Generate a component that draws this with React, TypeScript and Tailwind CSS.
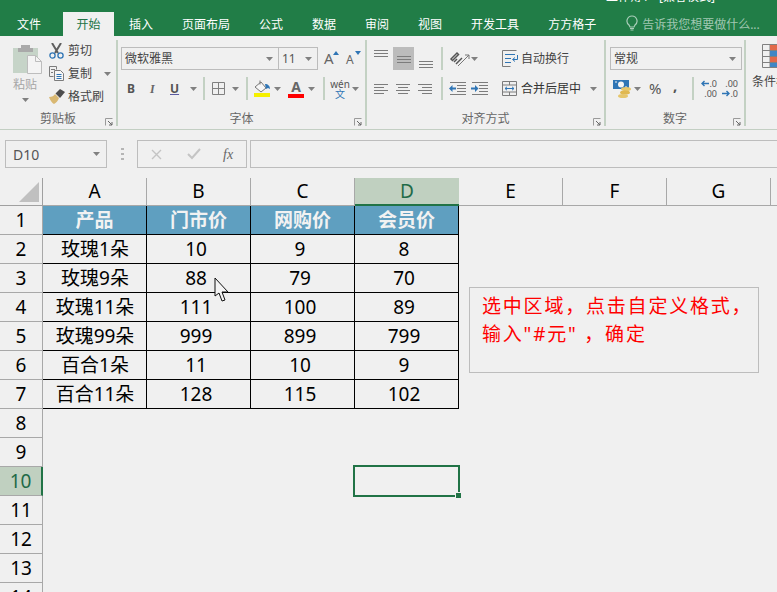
const tabs = ['插入', '页面布局', '公式', '数据', '审阅', '视图', '开发工具', '方方格子']
const cols = ['A', 'B', 'C', 'D', 'E', 'F', 'G', 'H']
const header = ['产品', '门市价', '网购价', '会员价']
const rows = [
  ['玫瑰1朵', '10', '9', '8'],
  ['玫瑰9朵', '88', '79', '70'],
  ['玫瑰11朵', '111', '100', '89'],
  ['玫瑰99朵', '999', '899', '799'],
  ['百合1朵', '11', '10', '9'],
  ['百合11朵', '128', '115', '102'],
]
const emptyRows = [8, 9, 10, 11, 12, 13, 14]

function Caret({ className = '' }: { className?: string }) {
  return (
    <svg width="7" height="4" viewBox="0 0 7 4" className={`shrink-0 ${className}`}>
      <path d="M0 0h7L3.5 4z" fill="#808080" />
    </svg>
  )
}

function Sep({ className = '' }: { className?: string }) {
  return <div className={`shrink-0 w-[2px] h-[23px] bg-[#c3d1c3] ${className}`} />
}

function Launcher() {
  return (
    <svg width="8" height="8" viewBox="0 0 8 8" className="absolute right-[3px] bottom-[0px]">
      <path d="M0.5 7.5V0.5H7.5" fill="none" stroke="#9a9a9a" />
      <path d="M3 3l4 4M4 7h3V4" fill="none" stroke="#666" />
    </svg>
  )
}

// horizontal line icons used by the alignment buttons
function Lines({ y, x, className = '' }: { y: number[]; x: [number, number][]; className?: string }) {
  return (
    <svg width="16" height="14" viewBox="0 0 16 14" className={`shrink-0 ${className}`}>
      {y.map((v, i) => (
        <path key={i} d={`M${x[i][0]} ${v + 0.5}H${x[i][1]}`} stroke="#7c7c7c" />
      ))}
    </svg>
  )
}

function Indent({ flip, className = '' }: { flip?: boolean; className?: string }) {
  return (
    <svg width="17" height="14" viewBox="0 0 17 14" className={`shrink-0 ${className}`}>
      <path d="M1 0.5H17M1 12.5H17M8 3.5H17M8 6.5H17M8 9.5H17" stroke="#7c7c7c" />
      {flip ? (
        <path d="M0 5.5H4V3l3.5 3.5L4 10V7.5H0z" fill="#2f75b5" />
      ) : (
        <path d="M7 5.5H3.5V3L0 6.5 3.5 10V7.5H7z" fill="#2f75b5" />
      )}
    </svg>
  )
}

function Group({ className, label, children }: { className: string; label: string; children: React.ReactNode }) {
  return (
    <div className={`relative h-[86px] shrink-0 border-r-2 border-[#c3d1c3] flex flex-col ${className}`}>
      <div className="h-[72px]">{children}</div>
      <div className="h-[14px] flex items-center justify-center text-[12px] leading-none text-[#666]">{label}</div>
      <Launcher />
    </div>
  )
}

function PasteIcon() {
  return (
    <svg width="29" height="30" viewBox="0 0 29 30">
      <path d="M0 4h25v25H0z" fill="#c6d4c8" />
      <path d="M8 1h9v3h3v4H5V4h3z" fill="#a9a9a9" />
      <path d="M14.5 11.5h8l6 6v12h-14z" fill="#f4f4f4" stroke="#bdbdbd" />
      <path d="M22.5 11.5v6h6" fill="none" stroke="#bdbdbd" />
    </svg>
  )
}

function ScissorsIcon() {
  return (
    <svg width="15" height="16" viewBox="0 0 15 16">
      <path d="M3 0l6 10M12 0L6 10" stroke="#5f5f5f" strokeWidth="2" fill="none" />
      <circle cx="3.5" cy="12.5" r="2.6" fill="none" stroke="#2f75b5" strokeWidth="1.3" />
      <circle cx="11.5" cy="12.5" r="2.6" fill="none" stroke="#2f75b5" strokeWidth="1.3" />
    </svg>
  )
}

function CopyIcon() {
  return (
    <svg width="15" height="15" viewBox="0 0 15 15">
      <path d="M0.5 0.5h7v3M0.5 0.5v10h4" fill="none" stroke="#7c7c7c" />
      <path d="M2 3.5h4M2 6.5h2" stroke="#7c7c7c" />
      <path d="M5.5 4.5h6l3 3v7h-9z" fill="#f6f6f6" stroke="#7c7c7c" />
      <path d="M7.5 8.5h5M7.5 10.5h5M7.5 12.5h5" stroke="#2f75b5" />
    </svg>
  )
}

function BrushIcon() {
  return (
    <svg width="16" height="15" viewBox="0 0 16 15">
      <path d="M0 8c3 0 5-1 6-3l4 4c-1 3-3 5-5 6-2-1-4-4-5-7z" fill="#d9b872" />
      <path d="M6.5 4.5L11 0l5 3-5 6z" fill="#4d4d4d" />
    </svg>
  )
}

function BordersIcon({ className = '' }: { className?: string }) {
  return (
    <svg width="13" height="13" viewBox="0 0 13 13" className={`shrink-0 ${className}`}>
      <path d="M0.5 0.5h12v12h-12zM6.5 0.5v12M0.5 6.5h12" fill="none" stroke="#808080" />
    </svg>
  )
}

function FillIcon({ className = '' }: { className?: string }) {
  return (
    <svg width="17" height="17" viewBox="0 0 17 17" className={`shrink-0 ${className}`}>
      <path d="M1 7l6-5 5 6-5 4z" fill="#f6f6f6" stroke="#777" />
      <path d="M6 0.5v4" stroke="#777" />
      <path d="M11 4c3 0 5 2 5 5l-2-1-2 1z" fill="#2f75b5" />
      <path d="M0 13h16v4H0z" fill="#f5f000" />
    </svg>
  )
}

function WrapIcon({ className = '' }: { className?: string }) {
  return (
    <svg width="16" height="17" viewBox="0 0 16 17" className={`shrink-0 ${className}`}>
      <path d="M0.5 0.5h14M0.5 16.5h8M0.5 0.5v16" stroke="#7c7c7c" fill="none" />
      <path d="M3 4.5h10M3 8.5h6M3 12.5h6" stroke="#2f75b5" />
      <path d="M15.5 5v4.5H11M13 7.5l-2.5 2 2.5 2" stroke="#2f75b5" fill="none" />
    </svg>
  )
}

function MergeIcon({ className = '' }: { className?: string }) {
  return (
    <svg width="15" height="15" viewBox="0 0 15 15" className={`shrink-0 ${className}`}>
      <path d="M0.5 0.5h14v14H0.5zM0.5 4h14M0.5 11h14M7.5 0.5V4M7.5 11v3.5" fill="none" stroke="#7c7c7c" />
      <path d="M3 7.5h9M5 5.8L3 7.5l2 1.7M10 5.8l2 1.7-2 1.7" fill="none" stroke="#2f75b5" />
    </svg>
  )
}

function OrientIcon({ className = '' }: { className?: string }) {
  return (
    <svg width="22" height="18" viewBox="0 0 22 18" className={`shrink-0 ${className}`}>
      <path d="M2 9l6-6 1.5 1.5-6 6zM7 14l6-6M5 12l3-3" stroke="#555" fill="none" strokeWidth="1.5" />
      <path d="M9 16l11-11M16 5h4v4" stroke="#777" fill="none" />
    </svg>
  )
}

function CurrencyIcon({ className = '' }: { className?: string }) {
  return (
    <svg width="19" height="18" viewBox="0 0 19 18" className={`shrink-0 ${className}`}>
      <path d="M0 0h16v9H0z" fill="#2f75b5" />
      <ellipse cx="8" cy="4.5" rx="3" ry="3" fill="#f4f4f4" />
      <path d="M2 2h2M12 7h2" stroke="#f4f4f4" />
      <ellipse cx="13" cy="9" rx="5" ry="2" fill="#e6c66b" />
      <ellipse cx="12" cy="12.5" rx="5" ry="2" fill="#e0b850" />
      <ellipse cx="10" cy="16" rx="5" ry="2" fill="#e6c66b" />
    </svg>
  )
}

function StylesIcon() {
  return (
    <svg width="15" height="24" viewBox="0 0 15 24" className="shrink-0">
      <path d="M0.5 0.5H15M0.5 6.5H15M0.5 12.5H15M0.5 18.5H15M0.5 23.5H15M0.5 0.5v23M8 0.5v23" fill="none" stroke="#808080" />
      <path d="M8 1h7v5H8zM8 13h7v5H8z" fill="#e2694a" />
      <path d="M8 7h7v5H8zM8 19h7v4H8z" fill="#3f86c6" />
    </svg>
  )
}

function DecimalArrow({ left }: { left?: boolean }) {
  return (
    <svg width="8" height="7" viewBox="0 0 8 7" className="shrink-0">
      {left ? (
        <path d="M8 3.5H1M3.5 1L1 3.5 3.5 6" fill="none" stroke="#2f75b5" strokeWidth="1.4" />
      ) : (
        <path d="M0 3.5H7M4.5 1L7 3.5 4.5 6" fill="none" stroke="#2f75b5" strokeWidth="1.4" />
      )}
    </svg>
  )
}

export default function App() {
  return (
    <div className="relative w-[777px] h-[592px] overflow-hidden bg-[#f0f0f0] font-['Noto_Sans','Noto_Sans_CJK_SC',sans-serif] text-black">
      {/* title bar, only the bottom of the caption is in frame */}
      <div className="h-[12px] bg-[#217d47] overflow-hidden">
        <div className="ml-[606px] -mt-[11px] text-[12px] leading-[16px] text-white whitespace-nowrap">工作簿1 - [兼容模式]</div>
      </div>

      {/* tabs */}
      <div className="h-[24px] bg-[#217d47] flex items-stretch text-[12px] text-white whitespace-nowrap">
        <div className="ml-[17px] leading-[26px]">文件</div>
        <div className="ml-[22px] w-[51px] bg-[#f0f0f0] text-[#217346] text-center leading-[26px]">开始</div>
        {tabs.map((t, i) => (
          <div key={t} className={`leading-[26px] ${i === 0 ? 'ml-[15px]' : 'ml-[29px]'}`}>{t}</div>
        ))}
        <svg width="12" height="16" viewBox="0 0 12 16" className="ml-[30px] mt-[3px]">
          <path d="M6 1a5 5 0 0 0-3 9l1 2h4l1-2a5 5 0 0 0-3-9z" fill="none" stroke="#a9cdb9" strokeWidth="1.2" />
          <path d="M4 13.5h4M4.5 15h3" stroke="#a9cdb9" />
        </svg>
        <div className="ml-[4px] leading-[26px] text-[#a0c7b2]">告诉我您想要做什么...</div>
      </div>

      {/* ribbon */}
      <div className="h-[94px] pt-[4px] border-b border-[#c3cfc3] flex text-[12px] text-[#444] whitespace-nowrap">
        <Group className="w-[118px]" label="剪贴板">
          <div className="flex">
            <div className="w-[49px] pl-[13px] pt-[4px] flex flex-col">
              <PasteIcon />
              <div className="mt-[2px] text-[#a6a6a6] leading-[18px]">粘贴</div>
              <Caret className="ml-[9px] mt-[4px]" />
            </div>
            <div className="flex flex-col -mt-[1px]">
              <div className="h-[23px] flex items-center"><ScissorsIcon /><span className="ml-[4px]">剪切</span></div>
              <div className="h-[23px] flex items-center"><CopyIcon /><span className="ml-[4px]">复制</span><Caret className="ml-[12px]" /></div>
              <div className="h-[23px] flex items-center"><BrushIcon /><span className="ml-[3px]">格式刷</span></div>
            </div>
          </div>
        </Group>

        <Group className="w-[249px]" label="字体">
          <div className="pl-[3px] pt-[7px]">
            <div className="flex items-center h-[23px]">
              <div className="w-[158px] h-[23px] border border-[#bcbcbc] flex items-center justify-between pl-[3px] pr-[5px]">
                <span>微软雅黑</span><Caret />
              </div>
              <div className="w-[40px] h-[23px] -ml-px border border-[#bcbcbc] flex items-center justify-between pl-[3px] pr-[5px]">
                <span className="text-[#555]">11</span><Caret />
              </div>
              <div className="ml-[6px] relative w-[14px] text-[15px] leading-none text-[#666]">A
                <svg width="6" height="4" viewBox="0 0 6 4" className="absolute -right-[1px] top-[0px]"><path d="M3 0l3 4H0z" fill="#2f75b5" /></svg>
              </div>
              <div className="ml-[8px] relative w-[14px] text-[12px] leading-none text-[#666] pt-[3px]">A
                <svg width="6" height="4" viewBox="0 0 6 4" className="absolute -right-[1px] top-[0px]"><path d="M0 0h6L3 4z" fill="#2f75b5" /></svg>
              </div>
            </div>
            <div className="flex items-center h-[23px] mt-[7px]">
              <span className="ml-[6px] w-[12px] font-bold text-[#555]">B</span>
              <span className="ml-[11px] w-[12px] font-bold italic text-[#666] font-['Liberation_Serif',serif]">I</span>
              <span className="ml-[8px] w-[10px] font-bold text-[#555] underline decoration-[#5b5ba0]">U</span>
              <Caret className="ml-[10px]" />
              <Sep className="ml-[6px]" />
              <BordersIcon className="ml-[7px]" />
              <Caret className="ml-[7px]" />
              <Sep className="ml-[7px]" />
              <FillIcon className="ml-[6px]" />
              <Caret className="ml-[3px]" />
              <div className="ml-[7px] w-[16px] shrink-0 flex flex-col items-center">
                <span className="text-[14px] leading-[14px] font-bold text-[#666]">A</span>
                <div className="w-[16px] h-[4px] bg-[#ff0000]" />
              </div>
              <Caret className="ml-[4px]" />
              <Sep className="ml-[8px]" />
              <div className="ml-[7px] w-[16px] shrink-0 flex flex-col items-center leading-none">
                <span className="text-[10px] text-[#555]">wén</span>
                <span className="text-[10px] text-[#2f75b5]">文</span>
              </div>
              <Caret className="ml-[4px]" />
            </div>
          </div>
        </Group>

        <Group className="w-[239px]" label="对齐方式">
          <div className="pl-[7px] pt-[7px]">
            <div className="flex items-center h-[23px]">
              <Lines y={[2, 5, 8]} x={[[0, 14], [0, 14], [0, 14]]} className="self-start mt-[1px]" />
              <div className="ml-[3px] w-[21px] h-[23px] shrink-0 bg-[#bcbcbc] flex items-center justify-center">
                <Lines y={[4, 7, 10]} x={[[1, 15], [1, 15], [1, 15]]} />
              </div>
              <Lines y={[5, 8, 11]} x={[[0, 14], [0, 14], [0, 14]]} className="ml-[5px] self-end" />
              <Sep className="ml-[6px]" />
              <OrientIcon className="ml-[6px]" />
              <Caret />
              <WrapIcon className="ml-[24px]" />
              <span className="ml-[3px]">自动换行</span>
            </div>
            <div className="flex items-center h-[23px] mt-[7px]">
              <Lines y={[2, 5, 8, 11]} x={[[0, 14], [0, 10], [0, 14], [0, 10]]} />
              <Lines y={[2, 5, 8, 11]} x={[[0, 14], [2, 12], [0, 14], [2, 12]]} className="ml-[6px]" />
              <Lines y={[2, 5, 8, 11]} x={[[0, 14], [4, 14], [0, 14], [4, 14]]} className="ml-[6px]" />
              <Sep className="ml-[7px]" />
              <Indent className="ml-[6px]" />
              <Indent flip className="ml-[5px]" />
              <MergeIcon className="ml-[14px]" />
              <span className="ml-[4px] text-[#333]">合并后居中</span>
              <Caret className="ml-[9px]" />
            </div>
          </div>
        </Group>

        <Group className="w-[140px]" label="数字">
          <div className="pl-[4px] pt-[7px]">
            <div className="w-[132px] h-[23px] border border-[#bcbcbc] flex items-center justify-between pl-[3px] pr-[5px]">
              <span>常规</span><Caret />
            </div>
            <div className="flex items-center h-[23px] mt-[7px]">
              <CurrencyIcon className="ml-[3px]" />
              <Caret className="ml-[2px]" />
              <span className="ml-[8px] w-[13px] shrink-0 text-[15px] text-[#555]">%</span>
              <span className="ml-[11px] w-[4px] shrink-0 text-[15px] font-bold text-[#555] leading-none -mt-[6px]">,</span>
              <Sep className="ml-[15px]" />
              <div className="ml-[7px] w-[16px] shrink-0 flex flex-col items-end text-[9px] leading-[10px] text-[#555]">
                <div className="flex items-center"><DecimalArrow left /><span>.0</span></div>
                <div>.00</div>
              </div>
              <div className="ml-[5px] w-[16px] shrink-0 flex flex-col items-end text-[9px] leading-[10px] text-[#555]">
                <div>.00</div>
                <div className="flex items-center"><DecimalArrow /><span>.0</span></div>
              </div>
            </div>
          </div>
        </Group>

        <div className="pl-[6px] pt-[4px] flex flex-col">
          <div className="pl-[10px]"><StylesIcon /></div>
          <span className="mt-[5px]">条件格式</span>
        </div>
      </div>

      {/* formula bar */}
      <div className="mt-[10px] h-[28px] flex items-stretch">
        <div className="ml-[5px] w-[102px] border border-[#bdbdbd] flex items-center justify-between pl-[7px] pr-[6px] text-[14px] text-[#555]">
          <span>D10</span><Caret />
        </div>
        <div className="ml-[14px] w-[3px] flex flex-col justify-center gap-[3px]">
          <div className="h-[2px] bg-[#b5b5b5]" /><div className="h-[2px] bg-[#b5b5b5]" /><div className="h-[2px] bg-[#b5b5b5]" />
        </div>
        <div className="ml-[13px] w-[110px] border border-[#bdbdbd] flex items-center">
          <svg width="11" height="11" viewBox="0 0 11 11" className="ml-[13px]"><path d="M1 1l9 9M10 1l-9 9" stroke="#c4c4c4" strokeWidth="1.4" /></svg>
          <svg width="14" height="12" viewBox="0 0 14 12" className="ml-[25px]"><path d="M1 6l4 4 8-9" fill="none" stroke="#c4c4c4" strokeWidth="2" /></svg>
          <span className="ml-[22px] text-[14px] italic font-['Liberation_Serif',serif] text-[#666]">fx</span>
        </div>
        <div className="ml-[3px] flex-1 border border-r-0 border-[#bdbdbd]" />
      </div>

      {/* sheet */}
      <div className="mt-[10px] grid grid-cols-[43px_repeat(8,104px)] grid-rows-[28px] auto-rows-[29px]">
        <div className="border-r border-b border-[#a0a0a0] relative">
          <svg width="20" height="20" viewBox="0 0 20 20" className="absolute left-[19px] top-[4px]"><path d="M20 0v20H0z" fill="#c0c0c0" /></svg>
        </div>
        {cols.map(c => (
          <div key={c} className={`flex items-center justify-center text-[19px] ${c === 'D' ? 'bg-[#c0d0c0] text-[#1f6b48] border-b-2 border-[#217346]' : 'border-b border-r border-[#a8a8a8]'}`}>{c}</div>
        ))}

        <div className="border-r border-b border-[#a8a8a8] flex items-center justify-center text-[19px]">1</div>
        {header.map(h => (
          <div key={h} className="bg-[#5f9fc0] border-r border-b border-black flex items-center justify-center text-[19px] font-bold text-[#f2f2f2]">{h}</div>
        ))}
        <div className="col-span-4" />

        {rows.map((r, i) => (
          <div key={r[0]} className="contents">
            <div className="border-r border-b border-[#a8a8a8] flex items-center justify-center text-[19px]">{i + 2}</div>
            {r.map((v, j) => (
              <div key={j} className={`border-r border-b border-black flex items-center justify-center text-[19px] ${j > 0 ? 'pr-[5px]' : 'pl-[1px]'}`}>{v}</div>
            ))}
            <div className="col-span-4" />
          </div>
        ))}

        {emptyRows.map(n => (
          <div key={n} className="contents">
            <div className={`border-b border-[#a8a8a8] flex items-center justify-center text-[19px] ${n === 10 ? 'bg-[#c0d0c0] text-[#1f6b48] border-r-2 border-r-[#217346]' : 'border-r'}`}>{n}</div>
            <div className="col-span-8" />
          </div>
        ))}
      </div>

      {/* text box over the sheet */}
      <div className="absolute left-[469px] top-[287px] w-[290px] h-[86px] border border-[#bdbdbd] pl-[12px] pt-[4px] text-[19px] leading-[28px] tracking-[1.8px] text-[#ff0000] whitespace-pre">
        <div>选中区域，点击自定义格式，</div>
        <div>输入"#元" ，确定</div>
      </div>

      {/* selected cell */}
      <div className="absolute left-[353px] top-[465px] w-[107px] h-[32px] border-2 border-[#217346]">
        <div className="absolute -right-[4px] -bottom-[4px] w-[7px] h-[7px] bg-[#217346] border border-[#f0f0f0]" />
      </div>

      {/* mouse pointer */}
      <svg width="18" height="26" viewBox="0 0 18 26" className="absolute left-[214px] top-[277px]">
        <path d="M1 1v18l4-3 3 8 3-1-3-8h6z" fill="#f4f4f4" stroke="#111" strokeWidth="1" />
      </svg>
    </div>
  )
}
